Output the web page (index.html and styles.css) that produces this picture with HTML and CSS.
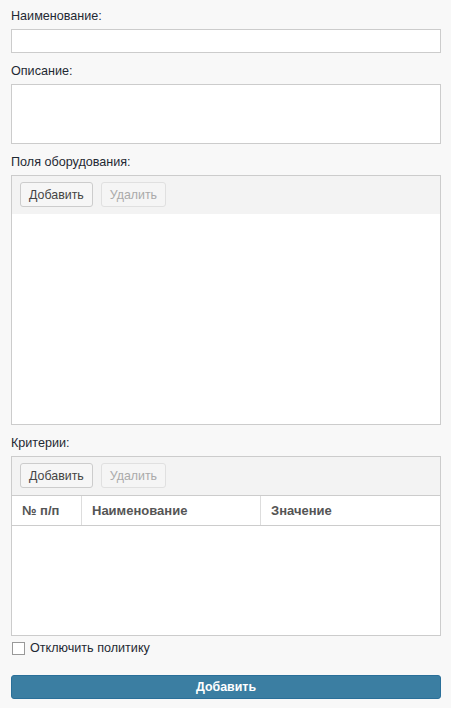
FILE: index.html
```html
<!DOCTYPE html>
<html lang="ru">
<head>
<meta charset="utf-8">
<link rel="stylesheet" href="styles.css">
</head>
<body>
<form class="form">
  <div class="field">
    <label class="label">Наименование:</label>
    <input class="input" type="text">
  </div>
  <div class="field">
    <label class="label">Описание:</label>
    <textarea class="textarea"></textarea>
  </div>
  <div class="field">
    <label class="label">Поля оборудования:</label>
    <div class="panel panel-fields">
      <div class="toolbar">
        <button type="button" class="btn">Добавить</button>
        <button type="button" class="btn btn-disabled">Удалить</button>
      </div>
      <div class="panel-body"></div>
    </div>
  </div>
  <div class="field">
    <label class="label">Критерии:</label>
    <div class="panel panel-criteria">
      <div class="toolbar">
        <button type="button" class="btn">Добавить</button>
        <button type="button" class="btn btn-disabled">Удалить</button>
      </div>
      <div class="grid-head">
        <div class="col col-num">№ п/п</div>
        <div class="col col-name">Наименование</div>
        <div class="col col-val">Значение</div>
      </div>
      <div class="panel-body"></div>
    </div>
  </div>
  <label class="check">
    <span class="checkbox"></span>
    <span class="check-text">Отключить политику</span>
  </label>
  <button type="button" class="submit">Добавить</button>
</form>
</body>
</html>
```
FILE: styles.css
```css
html, body {
  margin: 0;
  padding: 0;
  background: #f8f8f8;
}
body {
  font-family: "Liberation Sans", Arial, sans-serif;
  font-size: 12px;
  color: #222;
}
.form {
  padding: 8px 10px 0 11px;
  display: flex;
  flex-direction: column;
}
.field {
  display: flex;
  flex-direction: column;
  margin-bottom: 10px;
}
.label {
  display: block;
  height: 16px;
  line-height: 16px;
  font-size: 12.6px;
  margin-bottom: 5px;
  color: #1f2933;
}
.input {
  box-sizing: border-box;
  height: 24px;
  width: 100%;
  margin: 0;
  border: 1px solid #ccc;
  background: #fff;
  padding: 0 4px;
  outline: none;
}
.textarea {
  box-sizing: border-box;
  height: 60px;
  width: 100%;
  margin: 0;
  border: 1px solid #ccc;
  background: #fff;
  resize: none;
  outline: none;
  display: block;
}
.panel {
  box-sizing: border-box;
  border: 1px solid #ccc;
  background: #fff;
  display: flex;
  flex-direction: column;
}
.panel-fields { height: 250px; }
.panel-criteria { height: 180px; }
.toolbar {
  background: #f3f3f3;
  height: 38px;
  box-sizing: border-box;
  padding: 6px 8px 7px 8px;
  display: flex;
  gap: 8px;
}
.btn {
  box-sizing: border-box;
  height: 25px;
  margin: 0;
  padding: 0 8px;
  border: 1px solid #ccc;
  border-radius: 3px;
  background: #f6f6f6;
  font-family: "Liberation Sans", Arial, sans-serif;
  font-size: 12.4px;
  color: #444;
}
.btn-disabled {
  color: #aaa;
  border-color: #e0e0e0;
  background: #f5f5f5;
}
.panel-body {
  flex: 1;
}
.grid-head {
  display: flex;
  height: 31px;
  box-sizing: border-box;
  border-top: 1px solid #ccc;
  border-bottom: 1px solid #ccc;
}
.col {
  box-sizing: border-box;
  padding-left: 10px;
  font-weight: bold;
  color: #555;
  font-size: 13px;
  line-height: 29px;
}
.col-num { width: 70px; border-right: 1px solid #ddd; }
.col-name { width: 179px; border-right: 1px solid #ddd; }
.col-val { flex: 1; }
.check {
  display: flex;
  align-items: center;
  gap: 5px;
  margin-top: -4px;
  height: 13px;
  padding-left: 1px;
}
.checkbox {
  box-sizing: border-box;
  width: 13px;
  height: 13px;
  border: 1px solid #999;
  background: #fff;
}
.check-text {
  font-size: 12.6px;
  line-height: 13px;
  color: #1f2933;
}
.submit {
  margin-top: 20px;
  box-sizing: border-box;
  height: 24px;
  width: 100%;
  border: 1px solid #2a6f99;
  border-radius: 3px;
  background: #3b7ea2;
  color: #fff;
  font-family: "Liberation Sans", Arial, sans-serif;
  font-weight: bold;
  font-size: 12.4px;
}
```
